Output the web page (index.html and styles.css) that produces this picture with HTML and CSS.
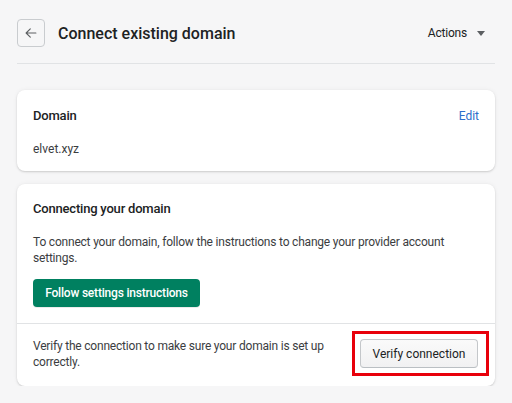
FILE: index.html
```html
<!DOCTYPE html>
<html>
<head>
<meta charset="utf-8">
<link rel="stylesheet" href="styles.css">
</head>
<body>
<div class="page">
  <header class="header">
    <button class="back" aria-label="Back">
      <svg width="14" height="14" viewBox="0 0 20 20"><path d="M17 10H3.5M9 4l-6 6 6 6" fill="none" stroke="#5c5f62" stroke-width="1.6" stroke-linecap="round" stroke-linejoin="round"/></svg>
    </button>
    <h1 class="title">Connect existing domain</h1>
    <div class="actions">Actions <svg class="caret" width="8" height="5" viewBox="0 0 8 5"><path d="M0 0h8L4 5z" fill="#5c5f62"/></svg></div>
  </header>
  <div class="divider"></div>

  <section class="card">
    <div class="card-head">
      <h2 class="card-title">Domain</h2>
      <a class="link">Edit</a>
    </div>
    <p class="domain">elvet.xyz</p>
  </section>

  <section class="card card2">
    <div class="section">
      <h2 class="card-title">Connecting your domain</h2>
      <p class="text">To connect your domain, follow the instructions to change your provider account settings.</p>
      <button class="primary">Follow settings instructions</button>
    </div>
    <div class="section verify">
      <p class="text vtext">Verify the connection to make sure your domain is set up correctly.</p>
      <span class="highlight"><button class="secondary">Verify connection</button></span>
    </div>
  </section>
</div>
</body>
</html>
```
FILE: styles.css
```css
* { box-sizing: border-box; }
body {
  margin: 0;
  background: #f6f6f7;
  font-family: Roboto, "Noto Sans", "Liberation Sans", sans-serif;
  color: #202223;
}
.page { padding: 19px 17px 0 17px; }
.header {
  display: flex;
  align-items: center;
  height: 28px;
}
.back {
  width: 28px;
  height: 28px;
  border: 1px solid #c9cccf;
  border-radius: 4px;
  background: transparent;
  display: flex;
  align-items: center;
  justify-content: center;
  padding: 0;
}
.title {
  margin: 0 0 0 13px;
  font-size: 16px;
  font-weight: 500;
  flex: 1;
}
.actions {
  font-size: 12px;
  letter-spacing: -0.2px;
  color: #202223;
  display: flex;
  align-items: center;
  margin-right: 10px;
}
.caret { margin-left: 10px; }
.divider {
  height: 1px;
  background: #e1e3e5;
  margin-top: 16px;
}
.card {
  background: #fff;
  border-radius: 8px;
  box-shadow: 0 0 5px rgba(23,24,24,0.05), 0 1px 2px rgba(0,0,0,0.15);
  margin-top: 26px;
  padding: 16px 16px 12px 16px;
}
.card-head {
  display: flex;
  justify-content: space-between;
  align-items: center;
}
.card-title {
  margin: 0;
  font-size: 13px;
  font-weight: 500;
  letter-spacing: -0.2px;
  line-height: 20px;
}
.link {
  color: #2c6ecb;
  font-size: 12px;
  line-height: 20px;
}
.domain {
  margin: 13px 0 0 0;
  font-size: 12px;
  line-height: 20px;
  color: #3b3d3f;
}
.card2 {
  margin-top: 13px;
  padding: 0;
}
.section { padding: 15px 16px 16px 16px; }
.text {
  margin: 15px 0 0 0;
  font-size: 12px;
  letter-spacing: -0.2px;
  line-height: 16px;
  color: #3b3d3f;
}
.primary {
  margin-top: 13px;
  background: #008060;
  color: #fff;
  border: none;
  border-radius: 4px;
  height: 28px;
  width: 167px;
  padding: 0;
  font-family: inherit;
  font-size: 12px;
  letter-spacing: -0.2px;
  font-weight: 500;
  box-shadow: 0 1px 0 rgba(0,0,0,0.08);
  display: block;
}
.verify {
  border-top: 1px solid #e1e3e5;
  display: flex;
  align-items: center;
  padding: 7px 6px 10px 16px;
}
.vtext {
  margin: 0;
  flex: 1;
  padding-right: 24px;
}
.highlight {
  display: inline-flex;
  border: 3px solid #e8000b;
  padding: 5px 8px 5px 5px;
}
.secondary {
  height: 29px;
  width: 118px;
  background: linear-gradient(#fafafa, #f1f1f2);
  border: 1px solid #c4c7ca;
  border-bottom-color: #babfc3;
  border-radius: 4px;
  font-family: inherit;
  font-size: 12px;
  font-weight: 400;
  color: #202223;
  padding: 0;
}
```
